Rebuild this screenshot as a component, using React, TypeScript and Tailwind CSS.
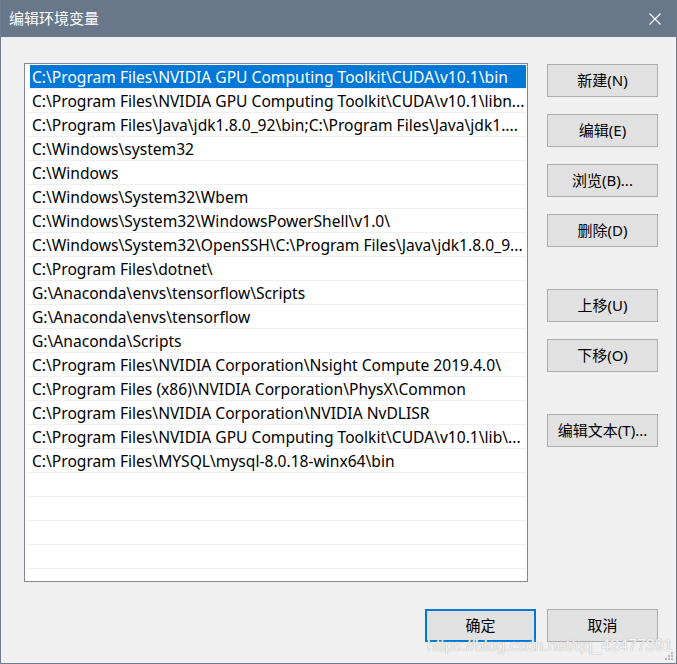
import React from 'react';

const paths = [
  'C:\\Program Files\\NVIDIA GPU Computing Toolkit\\CUDA\\v10.1\\bin',
  'C:\\Program Files\\NVIDIA GPU Computing Toolkit\\CUDA\\v10.1\\libn...',
  'C:\\Program Files\\Java\\jdk1.8.0_92\\bin;C:\\Program Files\\Java\\jdk1....',
  'C:\\Windows\\system32',
  'C:\\Windows',
  'C:\\Windows\\System32\\Wbem',
  'C:\\Windows\\System32\\WindowsPowerShell\\v1.0\\',
  'C:\\Windows\\System32\\OpenSSH\\C:\\Program Files\\Java\\jdk1.8.0_9...',
  'C:\\Program Files\\dotnet\\',
  'G:\\Anaconda\\envs\\tensorflow\\Scripts',
  'G:\\Anaconda\\envs\\tensorflow',
  'G:\\Anaconda\\Scripts',
  'C:\\Program Files\\NVIDIA Corporation\\Nsight Compute 2019.4.0\\',
  'C:\\Program Files (x86)\\NVIDIA Corporation\\PhysX\\Common',
  'C:\\Program Files\\NVIDIA Corporation\\NVIDIA NvDLISR',
  'C:\\Program Files\\NVIDIA GPU Computing Toolkit\\CUDA\\v10.1\\lib\\...',
  'C:\\Program Files\\MYSQL\\mysql-8.0.18-winx64\\bin',
];

const font = { fontFamily: '"Noto Sans", "Noto Sans CJK SC", sans-serif' };

const Btn = ({ label, primary = false }: { label: string; primary?: boolean }) => (
  <button
    className={`w-[111px] h-[33px] bg-[#e1e1e1] text-[15px] text-black flex items-center justify-center ${
      primary ? 'border-2 border-[#0078d7]' : 'border border-[#adadad]'
    }`}
  >
    {label}
  </button>
);

export default function App() {
  const empty = 4;

  return (
    <div
      className="relative w-[677px] h-[664px] bg-[#f0f0f0] border border-[#6e7d8f] border-t-0 flex flex-col overflow-hidden"
      style={font}
    >
      {/* Title bar */}
      <div className="h-[37px] -mx-[1px] bg-[#687789] flex items-center justify-between pl-[9px] pr-[15px] shrink-0">
        <span className="text-white text-[15px] leading-none">编辑环境变量</span>
        <svg width="12" height="12" viewBox="0 0 12 12" className="mr-[1px]">
          <path d="M0.5 0.5 L11.5 11.5 M11.5 0.5 L0.5 11.5" stroke="#ffffff" strokeWidth="1.1" fill="none" />
        </svg>
      </div>

      {/* Body */}
      <div className="flex gap-[19px] pl-[23px] pt-[26px]">
        {/* Path list */}
        <div className="w-[504px] h-[519px] bg-white border border-[#828790] px-[1px] pt-[1px] overflow-hidden">
          {paths.map((p, i) => (
            <div key={i} className="h-[24px] border-b border-[#f0f0f0] flex">
              {i === 0 ? (
                <div className="ml-[4px] flex-1 h-[23px] bg-[#0078d7] text-white text-[15.6px] leading-[24px] pl-[2px] whitespace-nowrap">
                  {p}
                </div>
              ) : (
                <div className="flex-1 h-[23px] text-black text-[15.6px] leading-[24px] pl-[6px] whitespace-nowrap">
                  {p}
                </div>
              )}
            </div>
          ))}
          {Array.from({ length: empty }).map((_, i) => (
            <div key={`e${i}`} className="h-[24px] border-b border-[#f0f0f0]" />
          ))}
        </div>

        {/* Side buttons */}
        <div className="flex flex-col pt-[1px]">
          <div className="flex flex-col gap-[17px]">
            <Btn label="新建(N)" />
            <Btn label="编辑(E)" />
            <Btn label="浏览(B)..." />
            <Btn label="删除(D)" />
          </div>
          <div className="flex flex-col gap-[17px] mt-[42px]">
            <Btn label="上移(U)" />
            <Btn label="下移(O)" />
          </div>
          <div className="mt-[42px]">
            <Btn label="编辑文本(T)..." />
          </div>
        </div>
      </div>

      {/* Footer */}
      <div className="flex justify-end gap-[11px] pr-[18px] mt-[27px]">
        <Btn label="确定" primary />
        <Btn label="取消" />
      </div>

      {/* Watermark overlay */}
      <div
        className="absolute left-[426px] top-[638px] text-[16px] leading-none text-white/80 pointer-events-none whitespace-nowrap"
        style={{ fontFamily: '"Liberation Sans", sans-serif', textShadow: '0 0 1px #b8b8b8, 0 0 1px #b8b8b8' }}
      >
        https://blog.csdn.net/qq_42477391
      </div>

      {/* Size grip */}
      <svg width="10" height="10" viewBox="0 0 10 10" className="absolute right-[2px] bottom-[2px]">
        {[
          [7, 1],
          [4, 4],
          [7, 4],
          [1, 7],
          [4, 7],
          [7, 7],
        ].map(([x, y], i) => (
          <rect key={i} x={x} y={y} width="2" height="2" fill="#b9b9b9" />
        ))}
      </svg>
    </div>
  );
}
